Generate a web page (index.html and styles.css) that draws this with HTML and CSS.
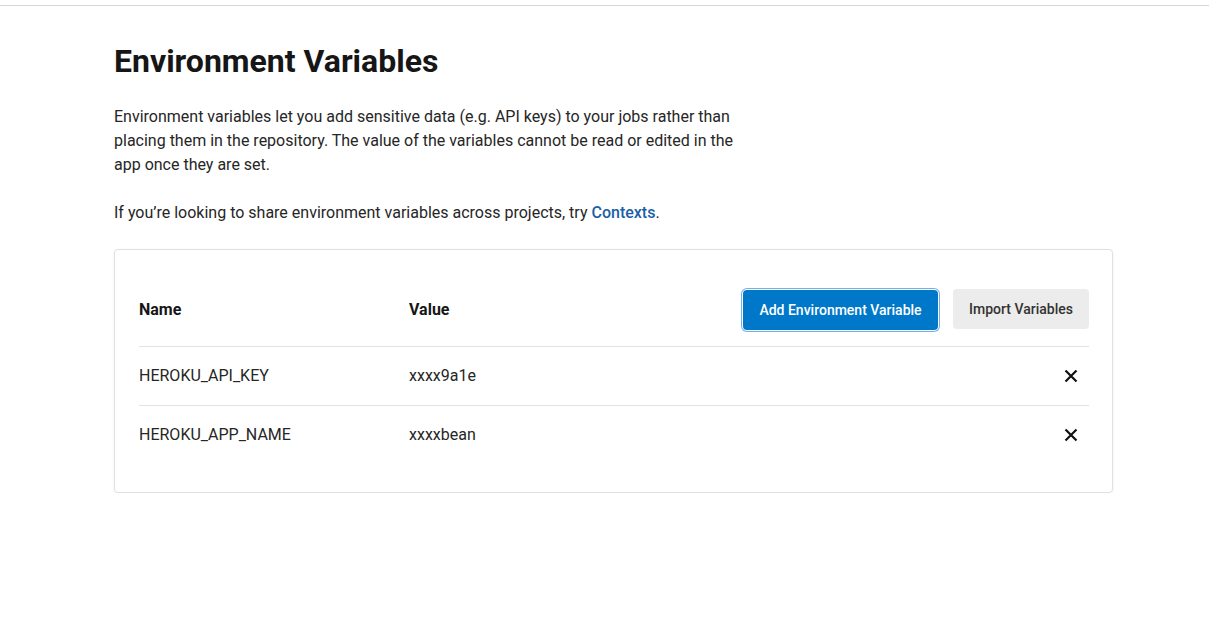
FILE: index.html
```html
<!DOCTYPE html>
<html lang="en">
<head>
<meta charset="utf-8">
<title>Environment Variables</title>
<link rel="stylesheet" href="styles.css">
</head>
<body>
<div class="topbar"></div>
<main class="page">
  <h1 class="title">Environment Variables</h1>
  <p class="desc">Environment variables let you add sensitive data (e.g. API keys) to your jobs rather than placing them in the repository. The value of the variables cannot be read or edited in the app once they are set.</p>
  <p class="desc">If you’re looking to share environment variables across projects, try <a class="link" href="#">Contexts</a>.</p>
  <section class="card">
    <div class="row head">
      <div class="col-name">Name</div>
      <div class="col-value">Value</div>
      <div class="actions">
        <button class="btn primary">Add Environment Variable</button>
        <button class="btn secondary">Import Variables</button>
      </div>
    </div>
    <div class="row">
      <div class="col-name">HEROKU_API_KEY</div>
      <div class="col-value">xxxx9a1e</div>
      <button class="del" aria-label="Delete"><svg width="14" height="14" viewBox="0 0 14 14"><path d="M1.5 1.5L12.5 12.5M12.5 1.5L1.5 12.5" stroke="#111" stroke-width="2.2" fill="none"/></svg></button>
    </div>
    <div class="row last">
      <div class="col-name">HEROKU_APP_NAME</div>
      <div class="col-value">xxxxbean</div>
      <button class="del" aria-label="Delete"><svg width="14" height="14" viewBox="0 0 14 14"><path d="M1.5 1.5L12.5 12.5M12.5 1.5L1.5 12.5" stroke="#111" stroke-width="2.2" fill="none"/></svg></button>
    </div>
  </section>
</main>
</body>
</html>
```
FILE: styles.css
```css
* { box-sizing: border-box; }
body {
  margin: 0;
  font-family: Roboto, "Liberation Sans", sans-serif;
  color: #161616;
  background: #fff;
}
.topbar {
  height: 6px;
  border-bottom: 1px solid #d6d6d6;
}
.page {
  width: 999px;
  margin-left: 114px;
  padding-top: 35px;
}
.title {
  margin: 0;
  font-size: 32px;
  line-height: 40px;
  font-weight: 700;
  color: #161616;
}
.desc {
  margin: 24px 0 0;
  width: 630px;
  font-size: 16px;
  line-height: 24px;
  color: #262626;
}
.desc + .desc { margin-top: 24px; }
.link {
  color: #1a5fa8;
  font-weight: 500;
  text-decoration: none;
}
.card {
  margin-top: 24px;
  border: 1px solid #e0e0e0;
  border-radius: 4px;
  box-shadow: 0 1px 3px rgba(0,0,0,0.06);
  padding: 24px 23px 28px 24px;
}
.row {
  display: flex;
  align-items: center;
  height: 59px;
  padding-bottom: 1px;
  border-bottom: 1px solid #e3e3e3;
  font-size: 16px;
  color: #262626;
}
.row.last { border-bottom: none; height: 58px; }
.row.head {
  height: 73px;
  padding-bottom: 2px;
  font-weight: 700;
  color: #161616;
}
.col-name { width: 270px; }
.col-value { flex: 1; }
.actions {
  display: flex;
  gap: 15px;
  align-items: center;
}
.btn {
  font-family: Roboto, "Liberation Sans", sans-serif;
  font-size: 14px;
  font-weight: 500;
  height: 40px;
  border-radius: 4px;
  border: none;
  padding: 0 8px;
  white-space: nowrap;
  cursor: pointer;
}
.btn.primary {
  background: #0078ca;
  color: #fff;
  width: 195px;
  margin-left: -1px;
  margin-top: 1px;
  box-shadow: 0 0 0 1px #fff, 0 0 0 2px #6fb1e8;
}
.btn.secondary {
  background: #ececec;
  color: #333;
  width: 136px;
}
.del {
  width: 24px;
  height: 24px;
  margin-right: 6px;
  border: none;
  background: none;
  padding: 0;
  display: flex;
  align-items: center;
  justify-content: center;
  cursor: pointer;
}
```
